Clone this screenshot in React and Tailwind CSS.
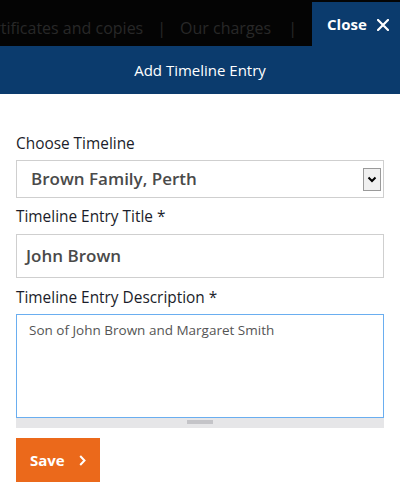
import React from "react";

const font = { fontFamily: "'Open Sans', 'Noto Sans', sans-serif" };

function Field({ label, children, mb }) {
  return (
    <div>
      <label className="block text-[15.4px] leading-[22px] text-[#1b1d2a] mb-[5px]">{label}</label>
      {children}
    </div>
  );
}

export default function App() {
  return (
    <div className="w-[400px] h-[491px] bg-white overflow-hidden" style={font}>
      {/* top site nav */}
      <div className="flex h-[46px] bg-[#040404]">
        <div className="flex-1 flex justify-end items-center overflow-hidden whitespace-nowrap pt-[10px] pr-[15px] text-[16px] text-[#282828]">
          <span>Certificates and copies</span>
          <span className="mx-[14px]">|</span>
          <span>Our charges</span>
          <span className="ml-[17px]">|</span>
        </div>
        <button className="mt-[2px] w-[88px] bg-[#0b3b6d] flex items-center pl-[15px] gap-[10px] text-white text-[15px] font-bold">
          Close
          <svg width="12" height="12" viewBox="0 0 12 12" className="mt-[1px]">
            <path d="M1 1 L11 11 M11 1 L1 11" stroke="white" strokeWidth="2.2" strokeLinecap="square" />
          </svg>
        </button>
      </div>

      {/* modal header */}
      <div className="h-[48px] bg-[#0b3b6d] flex items-center justify-center text-white text-[15px]">
        Add Timeline Entry
      </div>

      {/* form */}
      <div className="px-4 pt-[39px]">
        <Field label="Choose Timeline">
          <div className="h-[38px] border border-[#cfcfcf] flex items-center pl-[14px] pr-[2px]">
            <span className="flex-1 text-[17px] font-semibold text-[#4a4a4a]">Brown Family, Perth</span>
            <div className="w-[18px] h-[23px] border border-[#9a9a9a] bg-[#f0f0f0] flex items-center justify-center">
              <svg width="10" height="7" viewBox="0 0 10 7">
                <path d="M1.5 1.5 L5 5 L8.5 1.5" fill="none" stroke="#000" strokeWidth="2" />
              </svg>
            </div>
          </div>
        </Field>

        <div className="mt-[8px]">
          <label className="block text-[15.4px] leading-[22px] text-[#1b1d2a] mb-[6px]">Timeline Entry Title *</label>
          <div className="h-[44px] border border-[#cfcfcf] flex items-center pl-[9px] text-[17px] font-semibold text-[#4a4a4a]">
            John Brown
          </div>
        </div>

        <div className="mt-[9px]">
          <label className="block text-[15.4px] leading-[22px] text-[#1b1d2a] mb-[5px]">Timeline Entry Description *</label>
          <div className="h-[104px] border border-[#6aaef0] pl-[12px] pt-[4px] text-[13.5px] leading-[22px] text-[#555]">
            Son of John Brown and Margaret Smith
          </div>
          <div className="h-[10px] bg-[#e6e6e8] flex items-start justify-center">
            <div className="mt-[2px] w-[26px] h-[4px] bg-[#c4c4c8]"></div>
          </div>
        </div>

        <button className="mt-[10px] w-[84px] h-[44px] bg-[#eb691b] flex items-center pl-[14px] gap-[14px] text-white text-[15px] font-bold">
          Save
          <svg width="7" height="11" viewBox="0 0 7 11">
            <path d="M1.2 1 L5.5 5.5 L1.2 10" fill="none" stroke="white" strokeWidth="2" />
          </svg>
        </button>
      </div>
    </div>
  );
}
